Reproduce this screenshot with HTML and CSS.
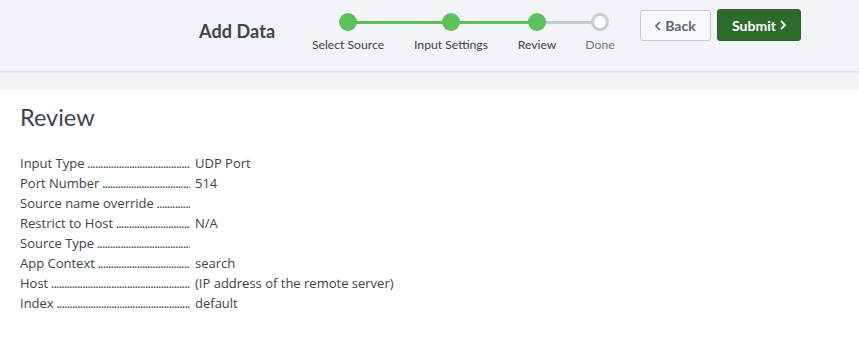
FILE: index.html
```html
<!DOCTYPE html>
<html>
<head>
<meta charset="utf-8">
<link rel="stylesheet" href="styles.css">
</head>
<body>
<header class="bar">
  <h1 class="title">Add Data</h1>
  <ol class="steps">
    <li class="step done-step"><span class="dot"></span><span class="label">Select Source</span></li>
    <li class="step done-step"><span class="dot"></span><span class="label">Input Settings</span></li>
    <li class="step done-step current"><span class="dot"></span><span class="label">Review</span></li>
    <li class="step pending"><span class="dot"></span><span class="label">Done</span></li>
  </ol>
  <div class="actions">
    <button class="btn back"><svg class="chev" width="6" height="10" viewBox="0 0 6 10"><path d="M5 1 1 5l4 4" fill="none" stroke="currentColor" stroke-width="1.6"/></svg>Back</button>
    <button class="btn submit">Submit<svg class="chev" width="6" height="10" viewBox="0 0 6 10"><path d="M1 1l4 4-4 4" fill="none" stroke="currentColor" stroke-width="1.8"/></svg></button>
  </div>
</header>
<div class="strip"></div>
<main class="content">
  <h2 class="heading">Review</h2>
  <dl class="review">
    <div class="row"><dt>Input Type</dt><dd>UDP Port</dd></div>
    <div class="row"><dt>Port Number</dt><dd>514</dd></div>
    <div class="row"><dt>Source name override</dt><dd></dd></div>
    <div class="row"><dt>Restrict to Host</dt><dd>N/A</dd></div>
    <div class="row"><dt>Source Type</dt><dd></dd></div>
    <div class="row"><dt>App Context</dt><dd>search</dd></div>
    <div class="row"><dt>Host</dt><dd>(IP address of the remote server)</dd></div>
    <div class="row"><dt>Index</dt><dd>default</dd></div>
  </dl>
</main>
</body>
</html>
```
FILE: styles.css
```css
* { box-sizing: border-box; }
html, body { margin: 0; padding: 0; background: #fff; }
body {
  font-family: "Lato", "Liberation Sans", sans-serif;
  color: #3c444d;
  width: 859px;
  height: 364px;
  overflow: hidden;
}
.bar {
  height: 71px;
  background: #f2f4f5;
  display: flex;
  align-items: flex-start;
  box-shadow: 0 1px 2px rgba(0,0,0,0.12);
  position: relative;
  z-index: 1;
}
.title {
  margin: 20px 0 0 199px;
  font-size: 18px;
  font-weight: 700;
  letter-spacing: 0.1px;
  color: #3c444d;
  width: 111px;
  flex: none;
}
.steps {
  list-style: none;
  margin: 13px 0 0 0;
  padding: 0;
  display: flex;
  flex: none;
}
.step {
  position: relative;
  display: flex;
  flex-direction: column;
  align-items: center;
}
.step:nth-child(1) { width: 82px; margin-left: -3px; }
.step:nth-child(2) { width: 124px; }
.step:nth-child(3) { width: 48px; }
.step:nth-child(4) { width: 78px; }
.dot {
  width: 18px;
  height: 18px;
  border-radius: 50%;
  background: #5cc05c;
  position: relative;
  z-index: 2;
}
.pending .dot {
  background: #fff;
  border: 3px solid #c3cbd4;
}
.step + .step::before {
  content: "";
  position: absolute;
  top: 8px;
  height: 3px;
  background: #5cc05c;
  right: 50%;
  z-index: 1;
}
.step:nth-child(2)::before { width: 103px; }
.step:nth-child(3)::before { width: 86px; }
.step:nth-child(4)::before { width: 63px; background: #c3cbd4; }
.label {
  margin-top: 6px;
  font-size: 12.2px;
  white-space: nowrap;
  color: #3c444d;
}
.pending .label { color: #6b7785; }
.actions {
  display: flex;
  gap: 6px;
  margin: 9px 0 0 0;
  padding-left: 1px;
  flex: none;
}
.btn {
  font-family: inherit;
  font-size: 14px;
  font-weight: 700;
  height: 32px;
  border-radius: 3px;
  display: flex;
  align-items: center;
  gap: 4px;
  cursor: pointer;
}
.back {
  margin-top: 1px;
  height: 31px;
  width: 71px;
  background: #f7f8fa;
  border: 1px solid #c3cbd4;
  color: #5c6773;
  justify-content: center;
  padding: 0;
}
.submit {
  width: 84px;
  background: #2d6a2c;
  border: 1px solid #2a6028;
  color: #fff;
  justify-content: center;
  padding: 0;
}
.chev { display: block; }
.strip {
  height: 19px;
  background: #f2f4f5;
}
.content {
  padding: 13px 20px 0;
}
.heading {
  margin: 0 0 22px;
  font-size: 23.5px;
  font-weight: 400;
  color: #3c444d;
}
.review { margin: 0; }
.row {
  display: flex;
  height: 20px;
  align-items: center;
  font-family: "Open Sans", "Liberation Sans", sans-serif;
  font-size: 13px;
}
.row dt {
  width: 170px;
  overflow: hidden;
  white-space: nowrap;
  margin-right: 5px;
}
.row dt::after {
  content: " .........................................................................................................";
  letter-spacing: -0.8px;
}
.row dd { margin: 0; white-space: nowrap; }
```
